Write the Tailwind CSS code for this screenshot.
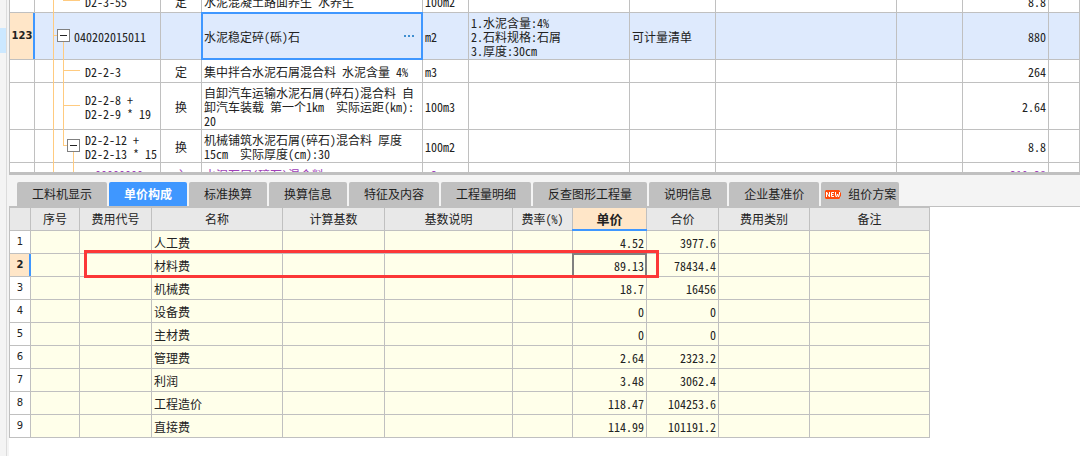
<!DOCTYPE html>
<html lang="zh-CN">
<head>
<meta charset="utf-8">
<title>单价构成</title>
<script src="https://cdn.jsdelivr.net/npm/@tailwindcss/browser@4"></script>
</head>
<body class="flex min-h-screen bg-white font-['Noto_Sans_Mono_CJK_SC','Noto_Sans_CJK_SC',monospace] text-xs leading-[14px] text-[#222]">
<aside class="flex w-[9px] shrink-0 bg-[#f4f4f4]">
  <div class="w-[6px] pt-7"><div class="h-[25px] bg-[#cce8ff]"></div></div>
  <div class="w-px bg-[#dcdcdc]"></div>
</aside>
<main class="min-w-0 flex-1">
  <!-- Bill of quantities, scrolled part-way -->
  <section class="h-[172px] overflow-hidden">
    <table class="-mt-[10px] w-full table-fixed border-separate border-spacing-0 border-l border-[#c0c0c0] [&_td]:border-r [&_td]:border-b [&_td]:border-[#c0c0c0] [&_td]:px-[2px] [&_td]:pt-[2px] [&_td]:pb-0 [&_th]:border-r [&_th]:border-b [&_th]:border-[#c0c0c0] [&_th]:p-0">
      <colgroup><col class="w-[25px]"><col class="w-[126px]"><col class="w-[41px]"><col class="w-[221px]"><col class="w-[46px]"><col class="w-[161px]"><col class="w-[86px]"><col class="w-[181px]"><col class="w-[66px]"><col class="w-[86px]"><col></colgroup>
      <tbody>
        <tr class="h-[23px]">
          <th></th>
          <td class="relative"><i class="absolute top-0 -bottom-px left-[18px] w-px bg-[#ffcb80]"></i><i class="absolute top-0 left-[28px] h-[10px] w-px bg-[#ffcb80]"></i><i class="absolute top-[10px] left-[28px] h-px w-[17px] bg-[#ffcb80]"></i><div class="pl-12">D2-3-55</div></td>
          <td class="text-center">定</td><td>水泥混凝土路面养生 水养生</td><td>100m2</td><td></td><td></td><td></td><td></td><td class="text-right">8.8</td><td></td>
        </tr>
        <tr class="h-[47px] bg-[#deeafd]">
          <th class="relative bg-[#ffe6c8] font-['DejaVu_Sans',sans-serif] text-[10px] font-bold">123<i class="absolute inset-y-0 -right-px w-[2px] bg-[#3f97ff]"></i></th>
          <td class="relative"><i class="absolute top-0 -bottom-px left-[18px] w-px bg-[#ffcb80]"></i><i class="absolute top-[22px] left-[18px] h-px w-1 bg-[#ffcb80]"></i><i class="absolute top-7 -bottom-px left-[28px] w-px bg-[#ffcb80]"></i><button aria-label="折叠" class="absolute top-4 left-[22px] flex size-[13px] items-center justify-center border border-[#808080] bg-white"><i class="h-px w-[7px] bg-[#222]"></i></button><div class="pl-[37px]">040202015011</div></td>
          <td></td>
          <td class="relative"><i class="absolute -inset-px border-2 border-[#3f97ff]"></i><div class="flex items-center justify-between"><span>水泥稳定碎(砾)石</span><button aria-label="更多" class="relative mr-[6px] flex gap-[2px] pt-1 pb-[6px]"><i class="size-[2px] bg-[#3f8fd0]"></i><i class="size-[2px] bg-[#3f8fd0]"></i><i class="size-[2px] bg-[#3f8fd0]"></i></button></div></td>
          <td>m2</td><td>1.水泥含量:4%<br>2.石料规格:石屑<br>3.厚度:30cm</td><td>可计量清单</td><td></td><td></td><td class="text-right">880</td><td></td>
        </tr>
        <tr class="h-[23px]">
          <th></th>
          <td class="relative"><i class="absolute top-0 -bottom-px left-[18px] w-px bg-[#ffcb80]"></i><i class="absolute top-0 -bottom-px left-[28px] w-px bg-[#ffcb80]"></i><i class="absolute top-[10px] left-[28px] h-px w-[17px] bg-[#ffcb80]"></i><div class="pl-12">D2-2-3</div></td>
          <td class="text-center">定</td><td>集中拌合水泥石屑混合料 水泥含量 4%</td><td>m3</td><td></td><td></td><td></td><td></td><td class="text-right">264</td><td></td>
        </tr>
        <tr class="h-[47px]">
          <th></th>
          <td class="relative"><i class="absolute top-0 -bottom-px left-[18px] w-px bg-[#ffcb80]"></i><i class="absolute top-0 -bottom-px left-[28px] w-px bg-[#ffcb80]"></i><i class="absolute top-[22px] left-[28px] h-px w-[17px] bg-[#ffcb80]"></i><div class="pl-12">D2-2-8 +<br>D2-2-9 * 19</div></td>
          <td class="text-center">换</td><td class="whitespace-nowrap">自卸汽车运输水泥石屑(碎石)混合料 自<br>卸汽车装载 第一个1km&nbsp; 实际运距(km):<br>20</td><td>100m3</td><td></td><td></td><td></td><td></td><td class="text-right">2.64</td><td></td>
        </tr>
        <tr class="h-[33px]">
          <th></th>
          <td class="relative"><i class="absolute top-0 -bottom-px left-[18px] w-px bg-[#ffcb80]"></i><i class="absolute top-0 left-[28px] h-4 w-px bg-[#ffcb80]"></i><i class="absolute top-[15px] left-[28px] h-px w-1 bg-[#ffcb80]"></i><i class="absolute top-[22px] -bottom-px left-[38px] w-px bg-[#ffcb80]"></i><button aria-label="折叠" class="absolute top-[9px] left-[32px] flex size-[13px] items-center justify-center border border-[#808080] bg-white"><i class="h-px w-[7px] bg-[#222]"></i></button><div class="pl-12 whitespace-nowrap">D2-2-12 +<br>D2-2-13 * 15</div></td>
          <td class="text-center">换</td><td class="whitespace-nowrap">机械铺筑水泥石屑(碎石)混合料 厚度<br>15cm&nbsp; 实际厚度(cm):30</td><td>100m2</td><td></td><td></td><td></td><td></td><td class="text-right">8.8</td><td></td>
        </tr>
        <tr class="h-[23px] text-[#a040b8]">
          <th></th>
          <td class="relative"><i class="absolute inset-y-0 left-[18px] w-px bg-[#ffcb80]"></i><i class="absolute inset-y-0 left-[38px] w-px bg-[#ffcb80]"></i><div class="pl-[58px]">00000000</div></td>
          <td class="text-center">主</td><td>水泥石屑(碎石)混合料</td><td>m3</td><td></td><td></td><td></td><td></td><td class="text-right">219.28</td><td></td>
        </tr>
      </tbody>
    </table>
  </section>
  <div class="h-[3px] bg-[#c0c0c0]"></div>
  <nav role="tablist" class="flex gap-[2px] border-b border-[#c0c0c0] bg-[#f4f4f4] pt-[7px] pl-2 font-['Noto_Sans_CJK_SC',sans-serif] [&_button]:h-6 [&_button]:rounded-t-xs [&_button]:px-[15px] [&_button]:whitespace-nowrap">
    <button role="tab" class="bg-[#c0c0c0]">工料机显示</button>
    <button role="tab" aria-selected="true" class="bg-[#3f97ff] font-bold text-white">单价构成</button>
    <button role="tab" class="bg-[#c0c0c0]">标准换算</button>
    <button role="tab" class="bg-[#c0c0c0]">换算信息</button>
    <button role="tab" class="bg-[#c0c0c0]">特征及内容</button>
    <button role="tab" class="bg-[#c0c0c0]">工程量明细</button>
    <button role="tab" class="bg-[#c0c0c0]">反查图形工程量</button>
    <button role="tab" class="bg-[#c0c0c0]">说明信息</button>
    <button role="tab" class="bg-[#c0c0c0]">企业基准价</button>
    <button role="tab" class="flex items-center gap-[7px] bg-[#c0c0c0] !pr-[3px] !pl-1"><svg width="16" height="9" viewBox="0 0 16 9" role="img" aria-label="NEW"><path d="M1 0h13l1 1v1l1 1v3l-1 1v1l-1 1H1L0 8V1z" fill="#ff4a0a"/><path d="M1.500 7V2L4.500 7V2M9 2.500H6.500V6.500H9M6.500 4.500H8.500M10.500 2V5.500L11.500 7L12.500 4L13.500 7L14.500 4V2" fill="none" stroke="#fff"/></svg>组价方案</button>
  </nav>
  <!-- Unit price breakdown -->
  <section class="relative w-[921px]">
    <table class="w-full table-fixed border-separate border-spacing-0 border-t border-l border-[#c0c0c0] [&_td]:border-r [&_td]:border-b [&_td]:border-[#c0c0c0] [&_td]:bg-[#ffffea] [&_td]:px-[2px] [&_td]:pt-[2px] [&_td]:pb-0 [&_th]:border-r [&_th]:border-b [&_th]:border-[#c0c0c0] [&_th]:p-0 [&_tr]:h-[23px]">
      <colgroup><col class="w-[21px]"><col class="w-[49px]"><col class="w-[72px]"><col class="w-[131px]"><col class="w-[102px]"><col class="w-[128px]"><col class="w-[60px]"><col class="w-[74px]"><col class="w-[72px]"><col class="w-[91px]"><col></colgroup>
      <thead class="bg-[#e8e8e8] [&_th]:font-normal">
        <tr><th></th><th>序号</th><th>费用代号</th><th>名称</th><th>计算基数</th><th>基数说明</th><th>费率(%)</th><th class="relative bg-[#ffe6c8] !font-bold text-[13px]">单价<i class="absolute -inset-x-px -bottom-px h-[2px] bg-[#3f97ff]"></i></th><th>合价</th><th>费用类别</th><th>备注</th></tr>
      </thead>
      <tbody class="[&_th]:font-['DejaVu_Sans',sans-serif] [&_th]:text-[10px] [&_th]:font-normal [&_td:nth-child(8)]:text-right [&_td:nth-child(9)]:text-right">
        <tr><th>1</th><td></td><td></td><td>人工费</td><td></td><td></td><td></td><td>4.52</td><td>3977.6</td><td></td><td></td></tr>
        <tr><th class="relative bg-[#ffe6c8] !font-bold">2<i class="absolute inset-y-0 -right-px w-[2px] bg-[#3f97ff]"></i></th><td></td><td></td><td>材料费</td><td></td><td></td><td></td><td class="relative"><i class="absolute -inset-px border-2 border-[#808080]"></i>89.13</td><td>78434.4</td><td></td><td></td></tr>
        <tr><th>3</th><td></td><td></td><td>机械费</td><td></td><td></td><td></td><td>18.7</td><td>16456</td><td></td><td></td></tr>
        <tr><th>4</th><td></td><td></td><td>设备费</td><td></td><td></td><td></td><td>0</td><td>0</td><td></td><td></td></tr>
        <tr><th>5</th><td></td><td></td><td>主材费</td><td></td><td></td><td></td><td>0</td><td>0</td><td></td><td></td></tr>
        <tr><th>6</th><td></td><td></td><td>管理费</td><td></td><td></td><td></td><td>2.64</td><td>2323.2</td><td></td><td></td></tr>
        <tr><th>7</th><td></td><td></td><td>利润</td><td></td><td></td><td></td><td>3.48</td><td>3062.4</td><td></td><td></td></tr>
        <tr><th>8</th><td></td><td></td><td>工程造价</td><td></td><td></td><td></td><td>118.47</td><td>104253.6</td><td></td><td></td></tr>
        <tr><th>9</th><td></td><td></td><td>直接费</td><td></td><td></td><td></td><td>114.99</td><td>101191.2</td><td></td><td></td></tr>
      </tbody>
    </table>
    <div class="absolute top-[43px] left-[75px] h-7 w-[575px] border-3 border-[#fc3838]"></div>
  </section>
</main>
</body>
</html>
